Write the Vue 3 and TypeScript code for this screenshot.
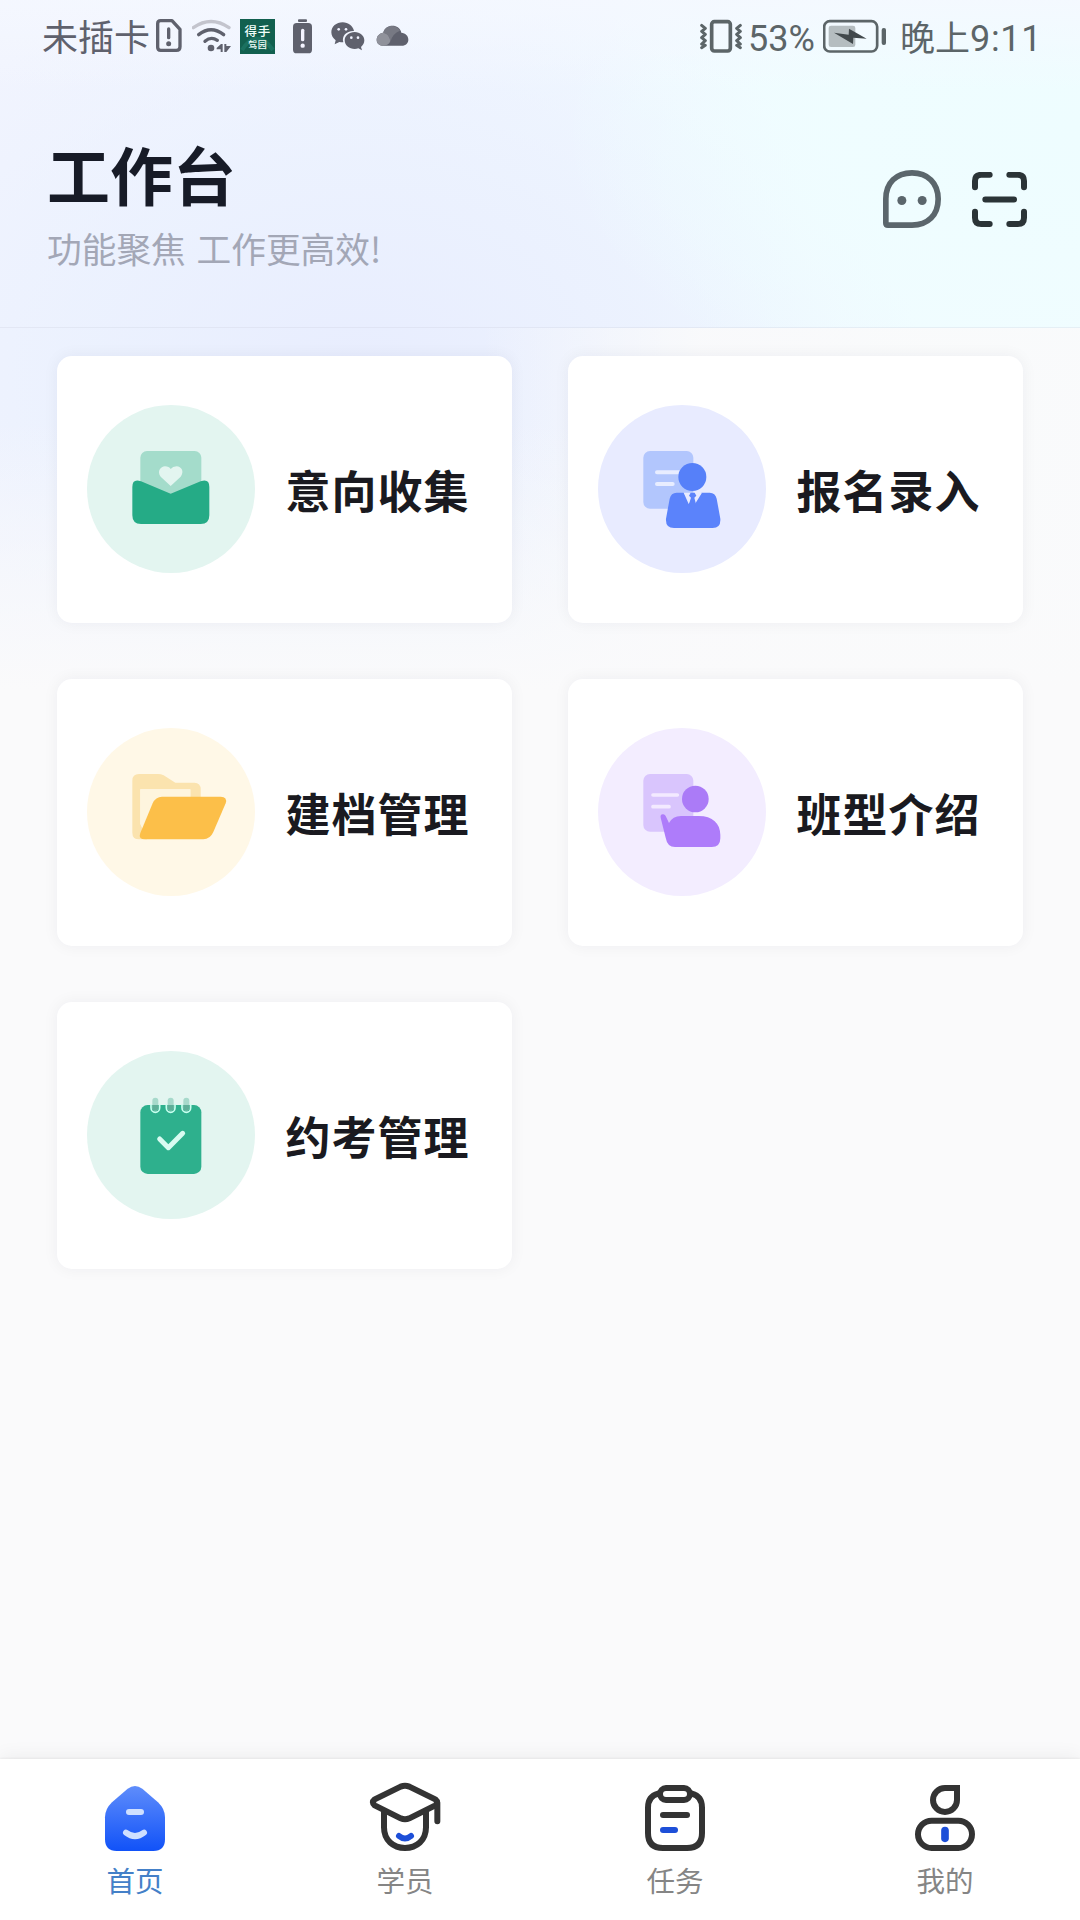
<script setup lang="ts">
interface Entry {
  key: string
  label: string
  tint: string
  viewBox: string
}

interface Tab {
  key: string
  label: string
  viewBox: string
}

const entries: Entry[] = [
  { key: 'intent', label: '意向收集', tint: '#e3f5f0', viewBox: '140 195 504 504' },
  { key: 'enroll', label: '报名录入', tint: '#e8ebff', viewBox: '143 195 504 504' },
  { key: 'archive', label: '建档管理', tint: '#fff8e7', viewBox: '140 204 504 504' },
  { key: 'classes', label: '班型介绍', tint: '#f3edff', viewBox: '143 204 504 504' },
  { key: 'exam', label: '约考管理', tint: '#e3f5f0', viewBox: '140 183 504 504' },
]

const tabs: Tab[] = [
  { key: 'home', label: '首页', viewBox: '117 126 216 216' },
  { key: 'student', label: '学员', viewBox: '927 126 216 216' },
  { key: 'task', label: '任务', viewBox: '117 126 216 216' },
  { key: 'mine', label: '我的', viewBox: '927 126 216 216' },
]

const activeTab = 'home'
</script>

<template>
  <div class="screen">
    <header class="header">
      <div class="status">
        <span class="status-text">未插卡</span>
        <svg class="sim" viewBox="408 54 78 108" width="26" height="36">
          <path d="M422 62H456L480 88V140Q480 151 469 151H422Q413 151 413 142V71Q413 62 422 62Z" fill="none" stroke="#5f616d" stroke-width="10" stroke-linejoin="round" />
          <path d="M446 87V113" stroke="#5f616d" stroke-width="10" stroke-linecap="round" />
          <circle cx="446" cy="131" r="7.5" fill="#5f616d" />
        </svg>
        <svg class="wifi" viewBox="516 54 117 108" width="39" height="36">
          <g fill="none" stroke-linecap="round" stroke-width="10">
            <path d="M520 83Q573 46 627 83" stroke="#c3c4cd" />
            <path d="M536 104Q573 74 611 104" stroke="#5f616d" />
            <path d="M555 124Q573 108 592 121" stroke="#5f616d" />
          </g>
          <circle cx="573" cy="144" r="10" fill="#5f616d" />
          <path d="M608 132V156H602V148H590V144L603 132ZM613 132H619V138H633L619 156H613Z" fill="#5f616d" />
        </svg>
        <svg class="app-badge" viewBox="0 0 35 35" width="35" height="35">
          <rect width="35" height="35" fill="#12604f" />
          <path d="M2 31Q17 8 33 31" fill="none" stroke="#1b7160" stroke-width="4" />
          <text x="17.7" y="17" font-size="12.5" text-anchor="middle" letter-spacing="0.6">得手</text>
          <text x="17.7" y="29.4" font-size="9" text-anchor="middle" letter-spacing="0.5">驾园</text>
        </svg>
        <svg class="low" viewBox="819 54 57 108" width="19" height="36">
          <rect x="834" y="58" width="27" height="8" rx="3" fill="#5f616d" />
          <rect x="819" y="69" width="57" height="91" rx="11" fill="#5f616d" />
          <path d="M848 91V119" stroke="#f4f4ff" stroke-width="10" stroke-linecap="round" />
          <circle cx="848" cy="137" r="6.5" fill="#f4f4ff" />
        </svg>
        <svg class="chat" viewBox="932 54 102 108" width="34" height="36">
          <path d="M967 67C948 67 933 80 933 97C933 107 938 115 946 121L943 133L957 126C960 127 964 127 969 127C963 108 979 92 1001 93C998 78 984 67 967 67Z" fill="#5f616d" />
          <path d="M1003 96C986 96 973 107 973 121C973 136 987 147 1003 147C1007 147 1011 146 1014 145L1025 151L1022 141C1028 136 1032 129 1032 121C1032 107 1019 96 1003 96Z" fill="#5f616d" />
          <g fill="#f0f3ff">
            <circle cx="955" cy="88" r="4" /><circle cx="977" cy="88" r="4" />
            <circle cx="993" cy="113" r="4" /><circle cx="1013" cy="113" r="4" />
          </g>
        </svg>
        <svg class="cloud" viewBox="1068 54 99 108" width="33" height="36">
          <path d="M1090 98C1078 100 1070 108 1070 119C1070 131 1079 137 1091 137H1145C1158 137 1165 129 1165 119C1165 107 1156 99 1144 98C1139 70 1096 70 1090 98Z" fill="#5f616d" />
          <path d="M1090 98C1078 100 1070 108 1070 119C1070 131 1079 137 1091 137Q1105 137 1111 124Q1109 100 1090 98Z" fill="#90929b" />
          <path d="M1090 98C1094 75 1128 70 1140 92Q1117 101 1112 124Q1107 102 1090 98Z" fill="#777983" />
        </svg>

        <svg class="vibrate" viewBox="60 54 126 108" width="42" height="36">
          <g fill="none" stroke="#5c6568" stroke-width="11" stroke-linejoin="round" stroke-linecap="round">
            <rect x="95" y="65" width="56" height="88" rx="8" />
            <path d="M65 76L76 85L65 94L76 103L65 113L76 122L65 132L76 136L65 143M181 76L170 85L181 94L170 103L181 113L170 122L181 132L170 136L181 143" stroke-width="9" />
          </g>
        </svg>
        <span class="status-text percent">53%</span>
        <svg class="battery" viewBox="429 54 189 108" width="63" height="36">
          <rect x="432.500" y="63.500" width="159" height="91" rx="17" fill="none" stroke="#5c6568" stroke-width="8" />
          <rect x="446" y="77" width="80" height="64" rx="7" fill="#b5bdc0" />
          <rect x="605" y="84" width="13" height="51" rx="6" fill="#5c6568" />
          <path d="M462 98L506 104L507 86L560 116L520 113L519 132Z" fill="#42494c" />
        </svg>
        <span class="status-text clock">晚上<span class="digits">9:11</span></span>
      </div>

      <div class="heading">
        <div class="titles">
          <h1>工作台</h1>
          <p>功能聚焦 工作更高效!</p>
        </div>
        <div class="actions">
          <svg viewBox="69 93 174 174" width="58" height="58">
            <path d="M77.500 180C77.500 131 109 101.500 156 101.500C203 101.500 234.500 132 234.500 180C234.500 228 204 258.500 156 258.500H84Q77.500 258.500 77.500 252Z" fill="none" stroke="#5b666c" stroke-width="17" />
            <circle cx="125.500" cy="184.500" r="13.500" fill="#5b666c" />
            <circle cx="186.500" cy="184.500" r="13.500" fill="#5b666c" />
          </svg>
          <svg viewBox="336 96 165 165" width="55" height="55">
            <path d="M345 142V123Q345 104.500 364 104.500H389M448 104.500H473Q492 104.500 492 123V142M345 215V233Q345 252 364 252H389M448 252H473Q492 252 492 233V215M376 178.500H462" fill="none" stroke="#2b3437" stroke-width="18" stroke-linecap="round" />
          </svg>
        </div>
      </div>
    </header>

    <main class="grid">
      <section v-for="entry in entries" :key="entry.key" class="card">
        <span class="disc" :style="{ background: entry.tint }">
          <svg :viewBox="entry.viewBox" width="168" height="168">
            <template v-if="entry.key === 'intent'">
              <rect x="300" y="333" width="183" height="160" rx="20" fill="#a4dccb" />
              <path d="M391 438L361 410C349 395 361 379 374 379Q386 379 391 387Q397 379 409 379C423 379 433 395 421 410Z" fill="#e3f5f0" />
              <path d="M276 441Q276 415 302 424L391 461L481 424Q507 415 507 441V526Q507 552 481 552H302Q276 552 276 526Z" fill="#25ab86" />
            </template>
            <template v-else-if="entry.key === 'enroll'">
              <rect x="279" y="333" width="150" height="173" rx="20" fill="#b2c6fd" />
              <path d="M320 397H385M320 432H367" stroke="#e8edff" stroke-width="12" stroke-linecap="round" />
              <circle cx="426" cy="411" r="42" fill="#5680f9" />
              <path d="M379 458H400L427 498L453 458H478Q495 458 499 476L510 536Q512 564 487 564H371Q345 564 347 536L358 476Q362 458 379 458Z" fill="#5b83fb" />
              <path d="M400 458L415 492L425 480L434 492L455 458Z" fill="#e8ebff" />
              <path d="M421 458H433L438 467L432 473L437 492L427 507L416 492L422 473L416 467Z" fill="#5b83fb" />
            </template>
            <template v-else-if="entry.key === 'archive'">
              <path d="M296 342H353Q362 342 370 346L405 368H462Q481 368 481 388V430H450V388H300V492L320 538H296Q276 538 276 518V362Q276 342 296 342Z" fill="#fbe3ae" />
              <path d="M300 388H450V420H350L308 500L300 492Z" fill="#fef5de" />
              <path d="M365 410H541Q562 410 556 430L519 516Q509 538 489 538H314Q293 538 300 519L337 430Q346 410 365 410Z" fill="#fcbf49" />
            </template>
            <template v-else-if="entry.key === 'classes'">
              <rect x="279" y="342" width="150" height="173" rx="20" fill="#d9c5fd" />
              <path d="M308 405H381M308 440H356" stroke="#f3eaff" stroke-width="11" stroke-linecap="round" />
              <circle cx="435" cy="417" r="40" fill="#ab7bf7" />
              <path d="M331 473Q329 464 337 463Q343 462 346 468L356 489Q367 468 392 468H445C487 468 510 491 510 524V535Q510 561 484 561H374Q351 561 346 533Z" fill="#ae7cfa" />
            </template>
            <template v-else>
              <rect x="300" y="345" width="183" height="207" rx="22" fill="#2eb08d" />
              <g v-for="x in [345, 391, 438]" :key="x">
                <path :d="`M${x - 13} 343V353A13 14 0 0 0 ${x + 13} 353V343`" fill="none" stroke="#c9fff0" stroke-width="5" />
                <rect :x="x - 9" y="323" width="18" height="39" rx="9" fill="#a7d9cb" />
                <path :d="`M${x - 9} 345H${x + 9}V353A9 9 0 0 1 ${x - 9} 353Z`" fill="#5eae98" />
              </g>
              <path d="M358 447L384 473L427 430" fill="none" stroke="#d8fbf1" stroke-width="15" stroke-linecap="round" stroke-linejoin="round" />
            </template>
          </svg>
        </span>
        <span class="label">{{ entry.label }}</span>
      </section>
    </main>

    <nav class="tabbar">
      <a v-for="tab in tabs" :key="tab.key" class="tab" :class="{ active: tab.key === activeTab }">
        <svg :viewBox="tab.viewBox" width="72" height="72">
          <template v-if="tab.key === 'home'">
            <defs>
              <linearGradient id="home-fill" x1="0" y1="0" x2="0" y2="1">
                <stop offset="0" stop-color="#5f8dfb" />
                <stop offset="1" stop-color="#1152f8" />
              </linearGradient>
            </defs>
            <path d="M203 146Q225 130 247 146L294 187Q315 207 315 232V298Q315 333 280 333H170Q135 333 135 298V232Q135 207 156 187Z" fill="url(#home-fill)" />
            <path d="M207 216H243" stroke="#cfe0ff" stroke-width="18" stroke-linecap="round" />
            <path d="M198 278Q225 299 252 278" fill="none" stroke="#cfe0ff" stroke-width="18" stroke-linecap="round" />
          </template>
          <template v-else-if="tab.key === 'student'">
            <g fill="none" stroke="#333" stroke-width="18" stroke-linejoin="round" stroke-linecap="round">
              <path d="M1022 140Q1035 135 1048 140L1126 178Q1137 187 1126 196L1048 235Q1035 241 1022 235L944 196Q933 187 944 178Z" />
              <path d="M1132 190V244M972 214V262C972 301 1000 324 1035 324C1070 324 1098 301 1098 262V214" />
            </g>
            <path d="M1017 288Q1035 303 1053 288" fill="none" stroke="#1d4fd8" stroke-width="18" stroke-linecap="round" />
          </template>
          <template v-else-if="tab.key === 'task'">
            <g fill="none" stroke="#333" stroke-width="18" stroke-linecap="round">
              <path d="M174 161Q144 169 144 203V279Q144 324 189 324H261Q306 324 306 279V203Q306 169 276 161" />
              <rect x="180" y="144" width="90" height="36" rx="18" />
              <path d="M189 225H261" />
            </g>
            <path d="M189 270H225" stroke="#1d4fd8" stroke-width="18" stroke-linecap="round" />
          </template>
          <template v-else>
            <g fill="none" stroke="#333" stroke-width="18">
              <path d="M1071 144H1035A36 36 0 1 0 1071 180Z" />
              <rect x="954" y="242" width="162" height="82" rx="41" />
            </g>
            <path d="M1035 272V295" stroke="#1d4fd8" stroke-width="23" stroke-linecap="round" />
          </template>
        </svg>
        <span>{{ tab.label }}</span>
      </a>
    </nav>
  </div>
</template>

<style>
body {
  background: #fafafb;
}
</style>

<style scoped>
.screen {
  width: 1080px;
  height: 1920px;
  display: flex;
  flex-direction: column;
  overflow: hidden;
  font-family: "Noto Sans CJK SC", sans-serif;
  background:
    linear-gradient(to bottom, rgba(250, 250, 251, 0) 420px, #fafafb 690px),
    linear-gradient(to right, rgba(250, 250, 251, 0) 480px, rgba(250, 250, 251, 0.9) 700px) 0 328px / 100% 1592px no-repeat,
    linear-gradient(to bottom, rgba(245, 248, 255, 0.8) 0, rgba(245, 248, 255, 0) 90px),
    radial-gradient(ellipse 520px 300px at 1080px 130px, #eefdff 0%, rgba(239, 253, 255, 0.9) 50%, rgba(243, 249, 255, 0) 100%),
    radial-gradient(ellipse 560px 400px at 360px 370px, #e8edfe 0%, rgba(235, 241, 254, 0.9) 50%, rgba(240, 244, 255, 0) 100%),
    linear-gradient(to right, #f1f4fe 0, #f0f6ff 500px, #f1fbff 800px, #f1fcff 100%);
}

.header {
  height: 328px;
  box-sizing: border-box;
  border-bottom: 1px solid rgba(200, 205, 220, 0.28);
  flex: none;
}

.status {
  display: flex;
  align-items: center;
  height: 72px;
  padding: 0 42px;
}

.status svg {
  flex: none;
}

.status-text {
  font-family: Roboto, "Noto Sans CJK SC", sans-serif;
  font-size: 36px;
  line-height: 36px;
  padding-top: 6px;
  color: #5f616d;
  white-space: nowrap;
}

.sim {
  margin-left: 6px;
}

.wifi {
  margin-left: 10px;
}

.app-badge {
  margin-left: 9px;
}

.app-badge text {
  fill: #f2fffb;
  font-family: "Noto Sans CJK SC", sans-serif;
  font-weight: 500;
}

.low {
  margin-left: 18px;
}

.chat {
  margin-left: 19px;
}

.cloud {
  margin-left: 11px;
}

.vibrate {
  margin-left: auto;
}

.percent {
  width: 75px;
  margin-left: 6px;
  color: #5c6568;
}

.clock {
  width: 138px;
  margin-left: 14px;
  font-size: 35px;
  color: #5c6568;
}

.digits {
  font-size: 36px;
  letter-spacing: 0.7px;
}

.heading {
  display: flex;
  justify-content: space-between;
  padding: 63px 53px 0 47px;
}

h1 {
  margin: 0;
  padding-top: 2px;
  font-size: 63px;
  line-height: 72px;
  font-weight: 700;
  color: #171b27;
}

p {
  margin: 17px 0 0;
  font-size: 34.700px;
  line-height: 44px;
  word-spacing: 3px;
  color: #a3a7b6;
}

.actions {
  display: flex;
  align-items: center;
  gap: 31px;
  height: 58px;
  margin-top: 35px;
}

.grid {
  flex: 1;
  display: grid;
  grid-template-columns: 455px 455px;
  grid-auto-rows: 267px;
  align-content: start;
  gap: 56px;
  padding: 28px 57px 0;
}

.card {
  display: flex;
  align-items: flex-start;
  gap: 31px;
  padding: 49px 0 0 29.500px;
  border-radius: 15px;
  background: #fff;
  box-shadow: 0 0 16px rgba(40, 30, 50, 0.055);
}

.disc {
  display: flex;
  width: 168px;
  height: 168px;
  border-radius: 50%;
}

.label {
  margin-top: 55px;
  font-size: 45px;
  line-height: 60px;
  letter-spacing: 1px;
  font-weight: 700;
  color: #1a1a20;
  white-space: nowrap;
}

.tabbar {
  display: flex;
  flex: none;
  height: 161px;
  background: #fff;
  box-shadow: 0 -1px 2px rgba(0, 0, 0, 0.05), 0 -3px 18px rgba(0, 0, 0, 0.055);
}

.tab {
  flex: 1;
  display: flex;
  flex-direction: column;
  align-items: center;
  gap: 8px;
  padding-top: 23px;
  font-size: 28.500px;
  line-height: 36px;
  color: #858585;
}

.tab.active {
  color: #4480c8;
}
</style>
